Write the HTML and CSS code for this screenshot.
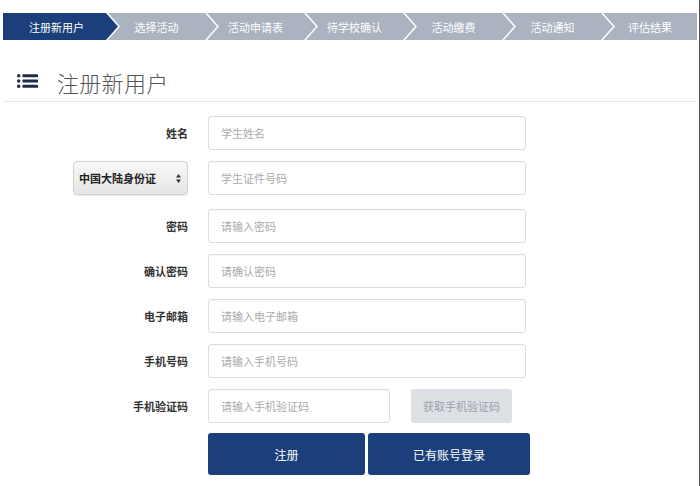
FILE: index.html
```html
<!DOCTYPE html>
<html lang="zh-CN">
<head>
  <meta charset="UTF-8" />
  <meta name="viewport" content="width=device-width, initial-scale=1.0"/>
  <title>注册新用户</title>
  <link rel="stylesheet" href="styles.css">
</head>
<body>
  <div class="page">
    <nav class="steps">
      <div class="step first active">注册新用户</div>
      <div class="step">选择活动</div>
      <div class="step">活动申请表</div>
      <div class="step">待学校确认</div>
      <div class="step">活动缴费</div>
      <div class="step">活动通知</div>
      <div class="step last">评估结果</div>
    </nav>

    <div class="title-bar">
      <svg class="list-icon" width="21" height="14" viewBox="0 0 21 14">
        <circle cx="1.7" cy="1.7" r="1.7"/>
        <circle cx="1.7" cy="7" r="1.7"/>
        <circle cx="1.7" cy="12.3" r="1.7"/>
        <rect x="5.5" y="0.2" width="15.5" height="3" rx="0.6"/>
        <rect x="5.5" y="5.5" width="15.5" height="3" rx="0.6"/>
        <rect x="5.5" y="10.8" width="15.5" height="3" rx="0.6"/>
      </svg>
      <h1>注册新用户</h1>
    </div>

    <form class="form" id="registerForm">
      <div class="row">
        <label class="label">姓名</label>
        <input class="field" type="text" placeholder="学生姓名">
      </div>
      <div class="row row-id">
        <div class="label">
          <div class="id-select">
            <span>中国大陆身份证</span>
            <svg width="5" height="9" viewBox="0 0 5 9">
              <path d="M2.5 0 L5 3.4 L0 3.4 Z M2.5 9 L5 5.6 L0 5.6 Z" fill="#333"/>
            </svg>
          </div>
        </div>
        <input class="field" type="text" placeholder="学生证件号码">
      </div>
      <div class="row">
        <label class="label">密码</label>
        <input class="field" type="password" placeholder="请输入密码">
      </div>
      <div class="row">
        <label class="label">确认密码</label>
        <input class="field" type="password" placeholder="请确认密码">
      </div>
      <div class="row">
        <label class="label">电子邮箱</label>
        <input class="field" type="text" placeholder="请输入电子邮箱">
      </div>
      <div class="row">
        <label class="label">手机号码</label>
        <input class="field" type="text" placeholder="请输入手机号码">
      </div>
      <div class="row">
        <label class="label">手机验证码</label>
        <div class="code-group">
          <input class="field code-field" type="text" placeholder="请输入手机验证码">
          <button type="button" class="code-btn">获取手机验证码</button>
        </div>
      </div>
      <div class="row actions">
        <div></div>
        <div class="btn-group">
          <button type="button" class="btn btn-register">注册</button>
          <button type="button" class="btn btn-login">已有账号登录</button>
        </div>
      </div>
    </form>
  </div>
</body>
</html>
```

FILE: styles.css
```css
body {
  margin: 0;
  background: #fff;
  font-family: "Noto Sans CJK SC", "Noto Sans", sans-serif;
  color: #333;
}
.page {
  width: 700px;
  min-height: 486px;
  box-sizing: border-box;
  padding: 13px 2px 0 3px;
  border-right: 1px solid #555;
}

/* step bar */
.steps {
  display: flex;
  height: 27px;
}
.step {
  flex: none;
  width: 109px;
  margin-left: -10px;
  padding-right: 12px;
  box-sizing: border-box;
  background: #aab3bf;
  color: #fff;
  font-size: 11px;
  display: flex;
  align-items: center;
  justify-content: center;
  clip-path: polygon(0 0, calc(100% - 12px) 0, 100% 50%, calc(100% - 12px) 100%, 0 100%, 12px 50%);
}
.step.first {
  width: 115px;
  margin-left: 0;
  padding-left: 4px;
  clip-path: polygon(0 0, calc(100% - 12px) 0, 100% 50%, calc(100% - 12px) 100%, 0 100%);
}
.step.last {
  flex: 1;
  padding-right: 0;
  clip-path: polygon(0 0, 100% 0, 100% 100%, 0 100%, 12px 50%);
}
.step.active {
  background: #1b3f7b;
}

/* title */
.title-bar {
  height: 62px;
  box-sizing: border-box;
  padding-top: 22px;
  display: flex;
  align-items: center;
  border-bottom: 1px solid #e6e6e6;
}
.list-icon {
  margin-left: 14px;
  margin-top: -2px;
  fill: #1f2c45;
}
.title-bar h1 {
  margin: 0 0 0 19px;
  font-size: 22px;
  font-weight: 300;
  color: #555;
  letter-spacing: 0.3px;
}

/* form */
.form {
  padding-top: 14px;
}
.row {
  display: grid;
  grid-template-columns: 185px 318px;
  column-gap: 20px;
  align-items: center;
  height: 34px;
  margin-bottom: 11px;
}
.row-id {
  margin-bottom: 14px;
}
.label {
  text-align: right;
  font-size: 11px;
  font-weight: bold;
  color: #333;
  display: flex;
  justify-content: flex-end;
}
.field {
  height: 34px;
  box-sizing: border-box;
  border: 1px solid #dcdcdc;
  border-radius: 3px;
  padding: 0 12px;
  font-family: inherit;
  font-size: 11px;
  color: #333;
  background: #fff;
  box-shadow: inset 0 1px 1px rgba(0,0,0,0.03);
  outline: none;
}
.field::placeholder {
  color: #aaa;
}
.id-select {
  width: 115px;
  height: 34px;
  box-sizing: border-box;
  border: 1px solid #d2d2d2;
  border-radius: 4px;
  background: linear-gradient(#f7f7f7, #e6e6e6);
  box-shadow: 0 1px 1px rgba(0,0,0,0.08);
  display: flex;
  align-items: center;
  justify-content: space-between;
  padding: 0 6px 0 5px;
  font-size: 11px;
  font-weight: bold;
  color: #222;
}
.code-group {
  display: flex;
  align-items: center;
  width: 330px;
}
.code-field {
  width: 182px;
}
.code-btn {
  margin-left: 21px;
  width: 101px;
  height: 34px;
  border: none;
  border-radius: 3px;
  background: #dde1e6;
  color: #9aa0a8;
  font-family: inherit;
  font-size: 11px;
  cursor: pointer;
}
.actions {
  height: 42px;
  margin-top: -1px;
}
.btn-group {
  display: flex;
  gap: 3px;
  width: 330px;
}
.btn {
  height: 42px;
  border: none;
  border-radius: 3px;
  background: #1b3f7b;
  color: #fff;
  font-family: inherit;
  font-size: 12px;
  cursor: pointer;
}
.btn-register {
  width: 157px;
}
.btn-login {
  width: 162px;
}
```
